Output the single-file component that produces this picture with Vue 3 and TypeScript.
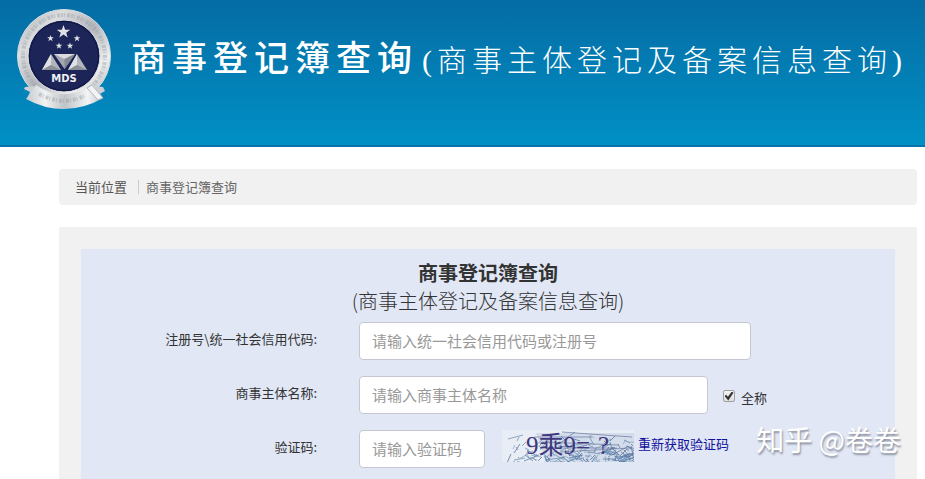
<script setup lang="ts">
import { ref } from 'vue'

const registrationCode = ref('')
const entityName = ref('')
const captcha = ref('')
const exactMatch = ref(true)

interface Stroke {
  d: string
  color: string
}

const strokeColors = ['#6c8db0', '#4f74a3', '#86a3bf', '#5a6f9a']

// Noise strokes over the captcha, denser towards the lower right.
function buildNoise(count: number): Stroke[] {
  let seed = 4177
  const next = (): number => {
    seed = (seed * 16807) % 2147483647
    return seed / 2147483647
  }
  return Array.from({ length: count }, (_, i) => {
    const x = Math.round(Math.pow(next(), 0.7) * 132)
    const y = Math.round((1 - next() * next()) * 32)
    const dx = Math.round((next() - 0.3) * 22)
    const dy = Math.round((next() - 0.5) * 18)
    return { d: `M${x} ${y}l${dx} ${dy}`, color: strokeColors[i % strokeColors.length] }
  })
}

const noise = ref<Stroke[]>(buildNoise(170))
</script>

<template>
  <div class="page">
    <header class="banner">
      <svg class="emblem" viewBox="0 0 96 104" role="img" aria-label="MDS">
        <defs>
          <linearGradient id="silver" x1="0" y1="0" x2="1" y2="1">
            <stop offset="0" stop-color="#a9adb2" />
            <stop offset="0.25" stop-color="#dcdee0" />
            <stop offset="0.5" stop-color="#b4b8bd" />
            <stop offset="0.75" stop-color="#eeeff0" />
            <stop offset="1" stop-color="#9da2a8" />
          </linearGradient>
          <linearGradient id="ribbon" x1="0" y1="0" x2="1" y2="0">
            <stop offset="0" stop-color="#c5cace" />
            <stop offset="0.25" stop-color="#f1f2f3" />
            <stop offset="0.5" stop-color="#bfc4c8" />
            <stop offset="0.8" stop-color="#f2f3f4" />
            <stop offset="1" stop-color="#c3c8cc" />
          </linearGradient>
          <path id="star" d="M0-7 1.700-2.300H6.700L2.700 0.700 4.200 5.500 0 2.600-4.200 5.500-2.700 0.700-6.700-2.300H-1.700Z" />
        </defs>
        <circle cx="48" cy="48" r="46.500" fill="url(#silver)" stroke="#d9dcdf" />
        <circle cx="48" cy="48" r="41" fill="none" stroke="#92989f" stroke-width="4" stroke-dasharray="2 1 1 2 3 1" opacity="0.4" />
        <circle cx="48" cy="48" r="36" fill="#1c2458" stroke="#e0e2e6" />
        <circle cx="48" cy="48" r="34.500" fill="none" stroke="#0e1540" />
        <g fill="#dfe1e6">
          <use href="#star" transform="translate(47.500 24)" />
          <use href="#star" transform="translate(34.500 30.500) scale(.5)" />
          <use href="#star" transform="translate(61 30.500) scale(.5)" />
          <use href="#star" transform="translate(43 38) scale(.5)" />
          <use href="#star" transform="translate(54 38) scale(.5)" />
        </g>
        <path d="M35 46 45 62H26Z" fill="#b2b5bc" />
        <path d="M35 46V57L26 62Z" fill="#e0e1e4" />
        <path d="M26 62 35 57 45 62Z" fill="#8c9099" />
        <path d="M61 46 71 62H52Z" fill="#b2b5bc" />
        <path d="M61 46V57L52 62Z" fill="#e0e1e4" />
        <path d="M52 62 61 57 71 62Z" fill="#8c9099" />
        <path d="M38 46H59L48.500 61Z" fill="#a4a7af" />
        <path d="M38 46H59L48.500 51Z" fill="#d9dbdf" />
        <path d="M59 46 48.500 61V51Z" fill="#858994" />
        <text class="emblem-text" x="48" y="74" text-anchor="middle">MDS</text>
        <path d="M9 79 18 78 23 91 12 89 14 84 8 81Z" fill="#ccd0d4" />
        <path d="M87 79 78 78 73 91 84 91 82 87 89 83Z" fill="#ccd0d4" />
        <path d="M20 77Q48 96 77 76L87 90Q68 101 48 101T10 91Z" fill="url(#ribbon)" />
        <path d="M76 77 87 90 82 92 71 80Z" fill="#f2f3f4" stroke="#b0b5ba" />
        <path d="M23 86Q48 99 70 87" fill="none" stroke="#8f959c" stroke-width="4" stroke-dasharray="3 1 1 2" opacity="0.4" />
      </svg>
      <h1 class="banner-title">商事登记簿查询<span class="banner-sub">(商事主体登记及备案信息查询)</span></h1>
    </header>

    <main class="content">
      <nav class="breadcrumb" aria-label="当前位置">
        <span>当前位置</span>
        <span class="divider"></span>
        <a class="crumb" href="#">商事登记簿查询</a>
      </nav>

      <section class="panel">
        <form class="query" @submit.prevent>
          <h2 class="query-title">商事登记簿查询</h2>
          <p class="query-sub">(商事主体登记及备案信息查询)</p>

          <div class="row">
            <label class="label" for="code">注册号\统一社会信用代码:</label>
            <input id="code" v-model="registrationCode" class="field wide" type="text" placeholder="请输入统一社会信用代码或注册号" />
          </div>
          <div class="row">
            <label class="label" for="name">商事主体名称:</label>
            <input id="name" v-model="entityName" class="field medium" type="text" placeholder="请输入商事主体名称" />
            <label class="check">
              <input v-model="exactMatch" class="box" type="checkbox" />
              <span>全称</span>
            </label>
          </div>
          <div class="row">
            <label class="label" for="captcha">验证码:</label>
            <input id="captcha" v-model="captcha" class="field short" type="text" placeholder="请输入验证码" />
            <div class="captcha">
              <svg class="captcha-image" viewBox="0 0 132 32" role="img" aria-label="9乘9=?">
                <rect width="132" height="32" fill="#e9edf5" />
                <path d="M34 3H132V32H44Z" fill="#bdcce0" opacity="0.5" />
                <path v-for="(stroke, i) in noise" :key="i" :d="stroke.d" :stroke="stroke.color" stroke-opacity="0.75" fill="none" />
                <path d="M60 2 130 7M32 7H90M40 12 116 15M38 18H112M58 22 128 18" stroke="#6b76a0" stroke-opacity="0.7" fill="none" />
                <text class="captcha-text" x="24" y="24">9乘9=</text>
                <text class="captcha-text" x="96" y="24">?</text>
              </svg>
              <a class="refresh" href="#">重新获取验证码</a>
            </div>
          </div>
          <div class="watermark">知乎 @卷卷</div>
        </form>
      </section>
    </main>
  </div>
</template>

<style>
body {
  margin: 0;
  background: #fff;
}
</style>

<style scoped>
.page {
  display: flex;
  flex-direction: column;
  min-height: 100vh;
  font-family: "Noto Sans CJK SC", sans-serif;
  font-size: 13px;
  line-height: 20px;
  color: #333;
}

.banner {
  display: flex;
  align-items: flex-start;
  box-sizing: border-box;
  height: 147px;
  padding: 8px 0 0 16px;
  border-bottom: 2px solid #0873a8;
  background: linear-gradient(#056ca4, #0090c5);
  color: #fff;
}

.emblem {
  flex: none;
  width: 96px;
  height: 104px;
}

.emblem-text {
  font: bold 10px "DejaVu Sans", sans-serif;
  fill: #eef0f3;
}

.banner-title {
  margin: 28px 0 0 19px;
  font-family: "Liberation Serif", "Noto Sans CJK SC", serif;
  font-size: 35px;
  font-weight: 500;
  line-height: 48px;
  letter-spacing: 6px;
  white-space: nowrap;
}

.banner-sub {
  margin-left: 4px;
  font-size: 30px;
  font-weight: 300;
  letter-spacing: 5px;
}

.content {
  display: flex;
  flex: 1;
  flex-direction: column;
  gap: 22px;
  margin: 22px 8px 0 59px;
}

.breadcrumb {
  display: flex;
  align-items: center;
  height: 36px;
  padding: 0 16px;
  border-radius: 4px;
  background: #f1f1f1;
  color: #555;
}

.divider {
  width: 1px;
  height: 14px;
  margin: 0 7px 0 11px;
  background: #ccc;
}

.crumb {
  color: #666;
  text-decoration: none;
}

.panel {
  display: flex;
  flex: 1;
  padding: 22px 22px 0;
  background: #f1f1f1;
}

.query {
  position: relative;
  display: flex;
  flex: 1;
  flex-direction: column;
  gap: 16px;
  padding: 10px 0 8px;
  background: #e1e7f5;
}

.query-title,
.query-sub {
  margin: 0;
  font-size: 20px;
  line-height: 28px;
  text-align: center;
}

.query-title {
  margin-bottom: -16px;
}

.query-sub {
  margin-bottom: -9px;
  font-weight: 300;
}

.row {
  display: flex;
  align-items: center;
}

.label {
  width: 236px;
  margin-right: 42px;
  padding-bottom: 4px;
  text-align: right;
}

.field {
  box-sizing: border-box;
  height: 38px;
  padding: 5px 12px 7px;
  border: 1px solid #c5c8d0;
  border-radius: 4px;
  background: #fff;
  font: inherit;
  font-size: 15px;
  color: #444;
}

.field::placeholder {
  color: #999;
  opacity: 1;
}

.wide {
  width: 392px;
}

.medium {
  width: 349px;
}

.short {
  width: 126px;
}

.check {
  display: flex;
  align-items: center;
  gap: 6px;
  margin-left: 15px;
  padding-top: 6px;
}

.box {
  display: grid;
  place-items: center;
  appearance: none;
  width: 12px;
  height: 12px;
  box-sizing: border-box;
  margin: 0 0 4px;
  border: 1px solid #a0a0a0;
  border-radius: 2px;
  background: linear-gradient(#f4f4f4, #dedede);
}

.box:checked::before {
  content: "";
  width: 9px;
  height: 9px;
  background: #333;
  clip-path: polygon(0 50%, 18% 35%, 38% 58%, 82% 0, 100% 14%, 42% 100%);
}

.captcha {
  display: flex;
  align-items: center;
  align-self: flex-start;
  gap: 4px;
  margin-left: 17px;
}

.captcha-image {
  width: 132px;
  height: 32px;
}

.captcha-text {
  font: 25px "Liberation Serif", "Noto Sans CJK SC", serif;
  fill: #40387e;
}

.refresh {
  padding-bottom: 4px;
  color: #11119c;
  text-decoration: none;
}

.watermark {
  position: absolute;
  top: 170px;
  right: -6px;
  font-size: 28px;
  line-height: 40px;
  color: #fff;
  text-shadow: 1px 2px 2px #8a8f9c;
  white-space: nowrap;
}
</style>
